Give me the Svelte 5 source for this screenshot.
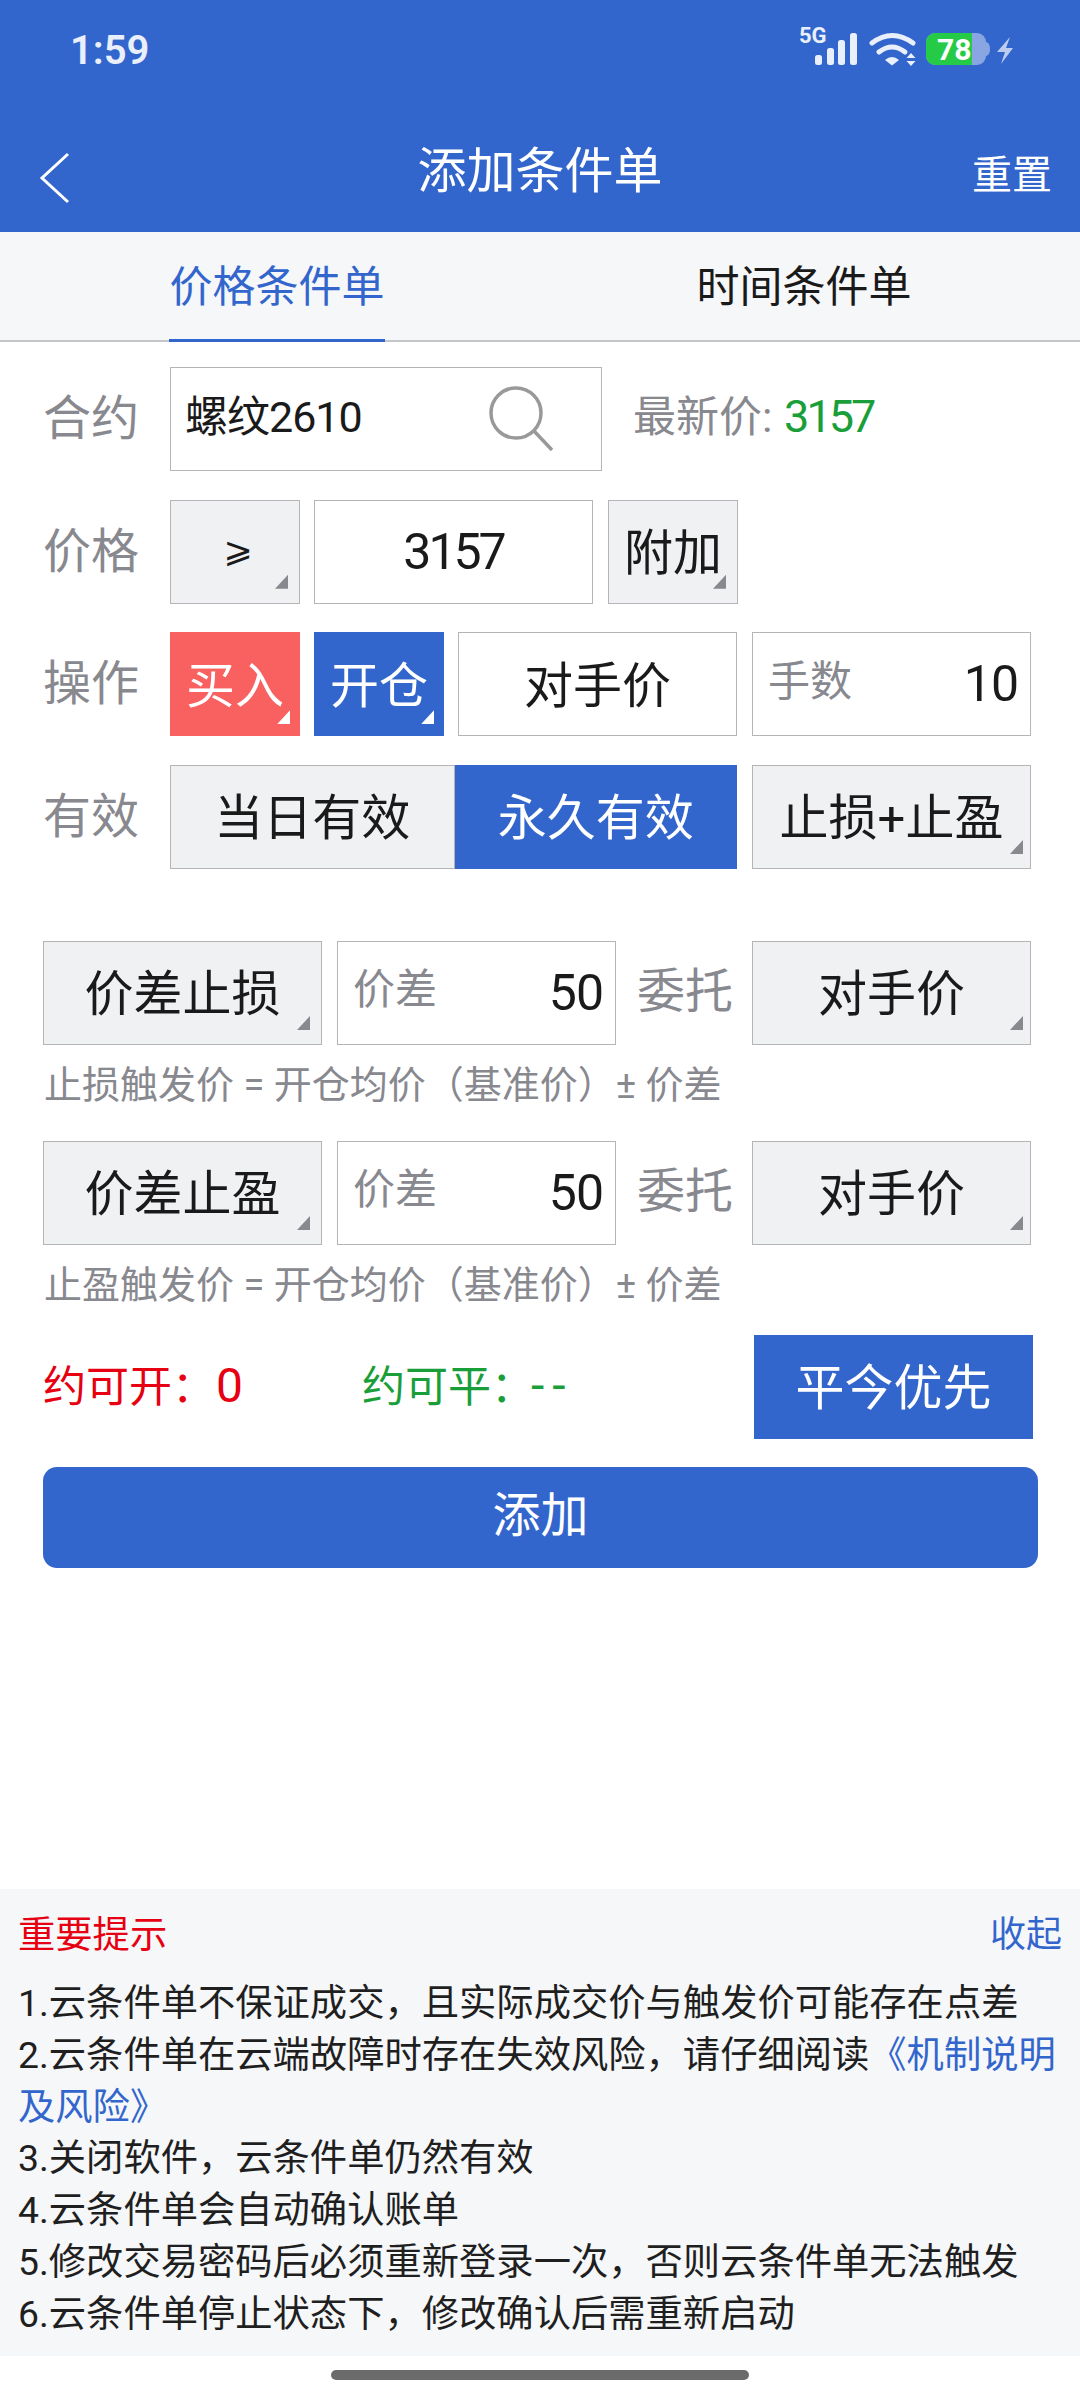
<script>
	const notes = [
		'1.云条件单不保证成交，且实际成交价与触发价可能存在点差',
		'3.关闭软件，云条件单仍然有效',
		'4.云条件单会自动确认账单',
		'5.修改交易密码后必须重新登录一次，否则云条件单无法触发',
		'6.云条件单停止状态下，修改确认后需重新启动'
	];
	const stops = [
		{ name: '价差止损', hint: '止损触发价 = 开仓均价（基准价）± 价差' },
		{ name: '价差止盈', hint: '止盈触发价 = 开仓均价（基准价）± 价差' }
	];
</script>

<div class="page">
	<header class="header">
		<div class="status">
			<span class="time">1:59</span>
			<svg class="status-icons" width="230" height="50" viewBox="790 25 230 50">
				<text x="799" y="43" class="net">5G</text>
				<g fill="#e9effb">
					<rect x="815" y="55" width="7" height="10" rx="2.5" />
					<rect x="827" y="48" width="7" height="17" rx="2.5" />
					<rect x="838" y="40" width="7" height="25" rx="2.5" />
					<rect x="850" y="33" width="7" height="32" rx="2.5" />
					<path d="M885 60q7-6 14 0l-7 5.500z" />
					<path d="M911 53l4.500 5h-9zM911 66l4.500-5h-9z" />
					<path d="M1010 37l-13 15h8l-4 12 12-16h-7z" opacity=".75" />
				</g>
				<g fill="none" stroke="#e9effb" stroke-width="5" stroke-linecap="round">
					<path d="M872 43q20-15 41 0" />
					<path d="M879 52q13-10 26 0" />
				</g>
				<rect x="926" y="33" width="60" height="32" rx="9" fill="#8aa6e2" />
				<path d="M986 42q4 1 4 7t-4 7z" fill="#8aa6e2" />
				<path d="M935 33h37v32h-37a9 9 0 0 1-9-9v-14a9 9 0 0 1 9-9z" fill="#25cb47" />
				<text x="937" y="60" class="level">78</text>
			</svg>
		</div>
		<nav class="nav">
			<svg class="back" width="32" height="54" viewBox="0 0 32 54">
				<path d="M29 3L3 27l26 24" fill="none" stroke="#fff" stroke-width="3" />
			</svg>
			<h1>添加条件单</h1>
			<span class="reset">重置</span>
		</nav>
	</header>

	<div class="tabs">
		<div class="tab active">价格条件单</div>
		<div class="tab">时间条件单</div>
	</div>

	<section class="form">
		<div class="row">
			<span class="label">合约</span>
			<div class="box contract">
				<span>螺纹2610</span>
				<svg width="66" height="66" viewBox="0 0 66 66">
					<circle cx="28" cy="27" r="25" fill="none" stroke="#999" stroke-width="3.5" />
					<path d="M46 45l18 19" stroke="#999" stroke-width="3.5" fill="none" />
				</svg>
			</div>
			<div class="latest">最新价: <b>3157</b></div>
		</div>

		<div class="row gap">
			<span class="label">价格</span>
			<div class="box gray w130 compare">⩾<i class="corner"></i></div>
			<div class="box w279 num">3157</div>
			<div class="box gray w130 extra">附加<i class="corner"></i></div>
		</div>

		<div class="row gap">
			<span class="label">操作</span>
			<div class="box w130 buy">买入<i class="corner white"></i></div>
			<div class="box w130 open">开仓<i class="corner white"></i></div>
			<div class="box w279">对手价</div>
			<div class="box w279 qty lots"><span class="ph">手数</span><span class="val">10</span></div>
		</div>

		<div class="row gap">
			<span class="label">有效</span>
			<div class="segment">
				<div class="box gray seg">当日有效</div>
				<div class="box seg on">永久有效</div>
			</div>
			<div class="box gray w279 plus">止损+止盈<i class="corner edge"></i></div>
		</div>

		{#each stops as stop, i}
			<div class="row stop" class:first={i === 0}>
				<div class="box gray w279">{stop.name}<i class="corner"></i></div>
				<div class="box w279 qty"><span class="ph">价差</span><span class="val">50</span></div>
				<span class="entrust">委托</span>
				<div class="box gray w279 last">对手价<i class="corner edge"></i></div>
			</div>
			<p class="hint">{stop.hint}</p>
		{/each}

		<div class="row counts">
			<span class="can red">约可开：<em>0</em></span>
			<span class="can green">约可平：<em class="dash">--</em></span>
			<div class="box priority">平今优先</div>
		</div>

		<div class="add">添加</div>
	</section>

	<section class="notes">
		<div class="notes-head">
			<span class="notes-title">重要提示</span>
			<span class="collapse">收起</span>
		</div>
		<p>{notes[0]}</p>
		<p>2.云条件单在云端故障时存在失效风险，请仔细阅读<span class="link">《机制说明及风险》</span></p>
		{#each notes.slice(1) as note}
			<p>{note}</p>
		{/each}
	</section>

	<div class="home-bar"></div>
</div>

<style>
	:global(body) {
		margin: 0;
		background: #fff;
	}
	.page {
		width: 1080px;
		height: 2400px;
		overflow: hidden;
		position: relative;
		font-family: Roboto, 'Noto Sans CJK SC', sans-serif;
		color: #1a1a1a;
	}
	.header {
		height: 232px;
		background: #3366cc;
		color: #fff;
	}
	.status {
		height: 100px;
		display: flex;
		align-items: center;
		justify-content: space-between;
		padding: 0 60px 0 70px;
	}
	.time {
		font-size: 40px;
		font-weight: 600;
		color: #e9effb;
	}
	.status-icons {
		display: block;
	}
	.net {
		font: 700 22px Roboto, sans-serif;
		fill: #e9effb;
	}
	.level {
		font: 700 30px Roboto, sans-serif;
		fill: #fff;
	}
	.nav {
		height: 132px;
		display: flex;
		align-items: center;
		justify-content: space-between;
		padding: 0 28px 0 39px;
		position: relative;
	}
	.back {
		margin-top: 23px;
	}
	.nav h1 {
		position: absolute;
		left: 0;
		right: 0;
		top: 40px;
		margin: 0;
		text-align: center;
		font-size: 49px;
		font-weight: 400;
		line-height: 64px;
	}
	.reset {
		font-size: 40px;
		margin-top: 12px;
	}
	.tabs {
		height: 110px;
		box-sizing: border-box;
		background: #f6f7f9;
		border-bottom: 2px solid #c4c6c9;
		display: flex;
		padding-left: 169px;
		gap: 311px;
	}
	.tab {
		width: 216px;
		height: 110px;
		box-sizing: border-box;
		text-align: center;
		font-size: 43px;
		line-height: 110px;
		white-space: nowrap;
	}
	.tab.active {
		color: #3366cc;
		border-bottom: 3px solid #3366cc;
	}
	.form {
		padding: 25px 0 0 43px;
	}
	.row {
		display: flex;
		height: 104px;
		align-items: stretch;
	}
	.row + .row {
		margin-top: 28.67px;
	}
	.gap {
		gap: 14px;
	}
	.label {
		width: 127px;
		font-size: 48px;
		line-height: 103px;
		color: #88888f;
		white-space: nowrap;
	}
	.gap .label {
		margin-right: -14px;
	}
	.box {
		position: relative;
		box-sizing: border-box;
		height: 104px;
		padding-bottom: 6px;
		border: 1.5px solid #b5b5b8;
		background: #fff;
		display: flex;
		align-items: center;
		justify-content: center;
		font-size: 49px;
		white-space: nowrap;
	}
	.gray {
		background: #f0f1f3;
	}
	.w130 {
		width: 130px;
	}
	.w279 {
		width: 279px;
	}
	.num {
		padding-bottom: 0;
		font-size: 50px;
		letter-spacing: -3px;
	}
	.compare {
		padding: 0 0 4px 6px;
		font-family: 'DejaVu Sans', sans-serif;
		font-size: 35px;
	}
	.extra {
		margin-left: 1px;
	}
	.corner {
		position: absolute;
		right: 11px;
		bottom: 14px;
		width: 13px;
		height: 14px;
		background: #88888f;
		clip-path: polygon(100% 0, 100% 100%, 0 100%);
	}
	.corner.white {
		background: #fff;
		right: 10px;
		bottom: 12px;
	}
	.corner.edge {
		right: 7px;
		bottom: 14px;
	}
	.contract {
		width: 432px;
		justify-content: space-between;
		padding: 0 47px 0 14px;
		font-size: 43px;
		letter-spacing: -1px;
	}
	.contract span {
		margin-top: -12px;
	}
	.latest {
		margin-left: 31px;
		font-size: 43px;
		line-height: 100px;
		color: #88888f;
		white-space: nowrap;
	}
	.latest b {
		font-weight: 400;
		color: #1a9e3a;
		font-size: 45px;
		letter-spacing: -3px;
		margin-left: 1px;
	}
	.buy {
		background: #f96060;
		border: 0;
		color: #fff;
	}
	.open {
		background: #3366cc;
		border: 0;
		color: #fff;
	}
	.qty {
		justify-content: space-between;
		padding: 0 12px 0 15px;
	}
	.lots {
		margin-left: 1px;
	}
	.val {
		font-size: 50px;
		letter-spacing: -1px;
	}
	.ph {
		font-size: 42px;
		color: #88888f;
		margin-top: -14px;
	}
	.segment {
		display: flex;
		width: 567px;
	}
	.seg {
		flex: 1;
	}
	.seg.on {
		background: #3366cc;
		border: 0;
		color: #fff;
	}
	.plus {
		margin-left: 1px;
	}
	.stop {
		gap: 15px;
	}
	.row.stop,
	.row.stop.first {
		margin-top: 0;
	}
	.row.stop.first {
		margin-top: 72px;
	}
	.entrust {
		width: 120px;
		margin-left: 6px;
		font-size: 48px;
		line-height: 102px;
		color: #88888f;
		white-space: nowrap;
	}
	.last {
		margin-left: -20px;
	}
	.hint {
		margin: 15px 0 31px 1px;
		height: 50px;
		font-size: 38px;
		line-height: 50px;
		color: #88888f;
		white-space: nowrap;
	}
	.row.counts {
		margin-top: -6px;
		align-items: center;
	}
	.can {
		font-size: 43px;
		line-height: 60px;
		white-space: nowrap;
		width: 319px;
	}
	.can em {
		font-style: normal;
		font-size: 48px;
		margin-left: 1px;
	}
	.can em.dash {
		margin-left: -3px;
		letter-spacing: 8px;
	}
	.red {
		color: #e60012;
	}
	.green {
		color: #1a9e3a;
		width: 392px;
	}
	.priority {
		width: 279px;
		background: #3366cc;
		border: 0;
		color: #fff;
	}
	.add {
		width: 995px;
		height: 101px;
		margin-top: 28px;
		background: #3366cc;
		border-radius: 14px;
		color: #fff;
		font-size: 48px;
		line-height: 98px;
		text-align: center;
	}
	.notes {
		position: absolute;
		left: 0;
		right: 0;
		top: 1889px;
		height: 467px;
		box-sizing: border-box;
		padding: 19px 18px 0;
		background: #f6f7f9;
		font-size: 37.3px;
	}
	.notes-head {
		display: flex;
		justify-content: space-between;
		line-height: 54px;
		margin-bottom: 16px;
	}
	.notes-title {
		color: #e60012;
	}
	.collapse {
		color: #3366cc;
		font-size: 36px;
	}
	.notes p {
		margin: 0;
		line-height: 51.8px;
		color: #1f1f1f;
	}
	.link {
		color: #3366cc;
	}
	.home-bar {
		position: absolute;
		left: 331px;
		top: 2370px;
		width: 418px;
		height: 10px;
		border-radius: 5px;
		background: #6b6b6b;
	}
</style>
